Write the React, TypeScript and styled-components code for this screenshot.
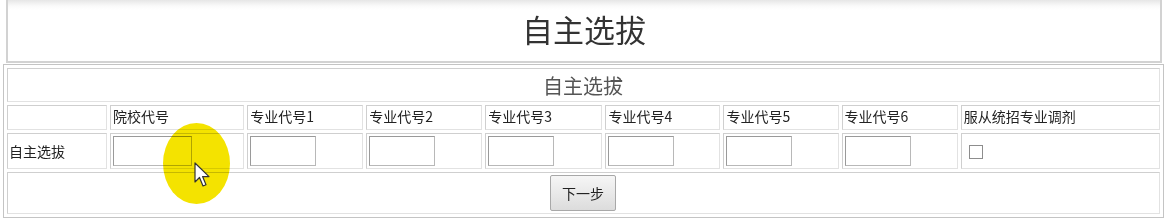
import styled, { createGlobalStyle } from 'styled-components';

const GlobalStyle = createGlobalStyle`
  html, body {
    margin: 0;
    padding: 0;
    background: #fff;
  }
  body {
    font-family: "Noto Sans CJK SC", "Liberation Sans", sans-serif;
    color: #222;
  }
`;

const Page = styled.div`
  position: relative;
  width: 1167px;
  height: 220px;
  padding: 0 3px;
  box-sizing: border-box;
  overflow: hidden;
`;

const TitleBox = styled.div`
  height: 63px;
  margin: 0 2px 0 3px;
  box-sizing: border-box;
  border: 2px solid #d2d2d2;
  border-top: none;
  background: linear-gradient(#e6e6e6 0px, #fafafa 6px, #fff 10px);
  display: flex;
  align-items: center;
  justify-content: center;
  font-size: 31px;
  color: #333;
  padding-bottom: 5px;
`;

const FormTable = styled.table`
  margin-top: 1px;
  width: 1161px;
  table-layout: fixed;
  border: 1px solid #c4c4c4;
  border-spacing: 3px;
  font-size: 14px;
`;

const Cell = styled.td<{ $height: number; $align?: string; $valign?: string }>`
  height: ${(p) => p.$height}px;
  box-sizing: border-box;
  border: 1px solid #cfcfcf;
  border-right-color: #e2e2e2;
  border-bottom-color: #e2e2e2;
  padding: 0 2px 0 1px;
  text-align: ${(p) => p.$align ?? 'left'};
  vertical-align: ${(p) => p.$valign ?? 'middle'};
  white-space: nowrap;
  overflow: hidden;
`;

const SubTitle = styled.span`
  font-size: 20px;
  color: #555;
`;

const Label = styled.div`
  line-height: 20px;
  padding-left: 1px;
`;

const CodeInput = styled.input<{ $width: number }>`
  display: block;
  width: ${(p) => p.$width}px;
  height: 30px;
  box-sizing: border-box;
  margin: 0 0 0 1px;
  padding: 0 3px;
  border: 1px solid #9a9a9a;
  border-right-color: #b8b8b8;
  border-bottom-color: #b8b8b8;
  background: #fff;
  font-size: 14px;
  outline: none;
`;

const Check = styled.input`
  appearance: none;
  display: block;
  width: 14px;
  height: 14px;
  margin: 2px 0 0 6px;
  border: 1px solid #8d8d8d;
  background: #fff;
`;

const NextButton = styled.button`
  width: 66px;
  height: 36px;
  margin-top: 0;
  border: 1px solid #a8a8a8;
  border-radius: 2px;
  background: linear-gradient(#f6f6f6, #dcdcdc);
  font-family: inherit;
  font-size: 14px;
  color: #222;
  padding: 0;
`;

const Highlight = styled.div`
  position: absolute;
  left: 163px;
  top: 123px;
  width: 67px;
  height: 81px;
  border-radius: 50%;
  background: #f4e300;
  mix-blend-mode: multiply;
  pointer-events: none;
`;

const Pointer = styled.svg`
  position: absolute;
  left: 194px;
  top: 162px;
  pointer-events: none;
`;

const columns = [100, 134, 116, 116, 117, 115, 115, 116, 199];
const headers = ['', '院校代号', '专业代号1', '专业代号2', '专业代号3', '专业代号4', '专业代号5', '专业代号6', '服从统招专业调剂'];

export default function App() {
  return (
    <Page>
      <GlobalStyle />
      <TitleBox>自主选拔</TitleBox>
      <FormTable>
        <colgroup>
          {columns.map((w, i) => (
            <col key={i} style={{ width: w }} />
          ))}
        </colgroup>
        <tbody>
          <tr>
            <Cell $height={34} colSpan={9} $align="center">
              <SubTitle>自主选拔</SubTitle>
            </Cell>
          </tr>
          <tr>
            {headers.map((h, i) => (
              <Cell key={i} $height={25} $valign="top">
                <Label>{h}</Label>
              </Cell>
            ))}
          </tr>
          <tr>
            <Cell $height={36}>自主选拔</Cell>
            <Cell $height={36}>
              <CodeInput type="text" $width={79} />
            </Cell>
            {[1, 2, 3, 4, 5, 6].map((n) => (
              <Cell key={n} $height={36}>
                <CodeInput type="text" $width={66} />
              </Cell>
            ))}
            <Cell $height={36}>
              <Check type="checkbox" />
            </Cell>
          </tr>
          <tr>
            <Cell $height={42} colSpan={9} $align="center">
              <NextButton type="button">下一步</NextButton>
            </Cell>
          </tr>
        </tbody>
      </FormTable>
      <Highlight />
      <Pointer width="16" height="26" viewBox="0 0 16 26">
        <path d="M1 1 L1 20 L5.5 15.5 L9 24 L12 22.8 L8.6 14.6 L15 14.6 Z" fill="#fff" stroke="#333" strokeWidth="1.2" strokeLinejoin="round" />
      </Pointer>
    </Page>
  );
}
